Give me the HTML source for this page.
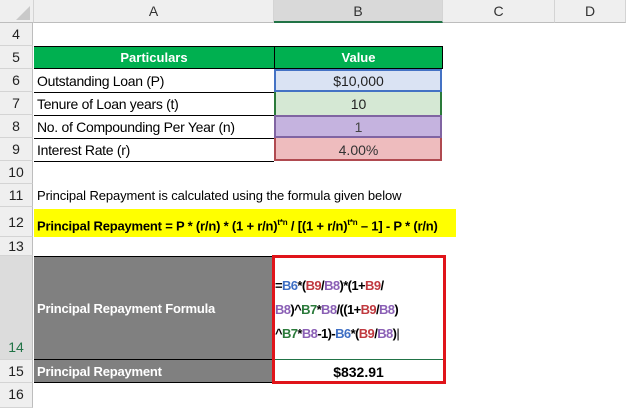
<!DOCTYPE html>
<html><head><style>
*{margin:0;padding:0;box-sizing:border-box}
body{width:626px;height:408px;overflow:hidden;background:#fff;font-family:"Liberation Sans",sans-serif;font-size:13px;color:#000;position:relative}
.a{position:absolute}
.rh{position:absolute;left:0;width:33px;background:#efefef;border-bottom:1px solid #d4d4d4;border-right:1px solid #bdbdbd;text-align:center;color:#222;font-size:14px}
.ch{position:absolute;top:0;height:23px;background:#efefef;border-right:1px solid #d4d4d4;border-bottom:1px solid #bdbdbd;text-align:center;line-height:23px;color:#333;font-size:14px}
.c{position:absolute;white-space:nowrap;line-height:22px}
.b{color:#3e6fc4}.r{color:#c0393f}.p{color:#8a5fb5}.g{color:#2a7a3a}
</style></head><body>
<div class="ch" style="left:0;width:34px"></div>
<svg class="a" style="left:14px;top:6px" width="16" height="14"><polygon points="16,0 16,14 2,14" fill="#c9c9c9"/></svg>
<div class="ch" style="left:34px;width:240px">A</div>
<div class="ch" style="left:274px;width:169px;background:#d9d9d9;border-bottom:2px solid #217346">B</div>
<div class="ch" style="left:443px;width:112px">C</div>
<div class="ch" style="left:555px;width:71px">D</div>

<div class="rh" style="top:23px;height:23px;line-height:23px">4</div>
<div class="rh" style="top:46px;height:23px;line-height:23px">5</div>
<div class="rh" style="top:69px;height:23px;line-height:23px">6</div>
<div class="rh" style="top:92px;height:23px;line-height:23px">7</div>
<div class="rh" style="top:115px;height:23px;line-height:23px">8</div>
<div class="rh" style="top:138px;height:23px;line-height:23px">9</div>
<div class="rh" style="top:161px;height:23px;line-height:23px">10</div>
<div class="rh" style="top:184px;height:23px;line-height:23px">11</div>
<div class="rh" style="top:207px;height:30px;line-height:30px">12</div>
<div class="rh" style="top:237px;height:19px;line-height:19px">13</div>
<div class="rh" style="top:256px;height:104px;line-height:26px;padding-top:78px;color:#217346;background:#dcdcdc">14</div>
<div class="rh" style="top:360px;height:23px;line-height:23px">15</div>
<div class="rh" style="top:383px;height:25px;line-height:23px">16</div>

<div class="a" style="left:34px;top:46px;width:409px;height:23px;background:#00b050;border-top:1px solid #000;border-bottom:1px solid #000"></div>
<div class="a" style="left:274px;top:46px;width:1px;height:23px;background:#000"></div>
<div class="a" style="left:442px;top:46px;width:1px;height:23px;background:#000"></div>
<div class="c" style="left:34px;top:47px;width:240px;text-align:center;color:#fff;font-weight:bold">Particulars</div>
<div class="c" style="left:274px;top:47px;width:169px;text-align:center;color:#fff;font-weight:bold">Value</div>

<div class="a" style="left:34px;top:92px;width:240px;height:1px;background:#000"></div>
<div class="a" style="left:34px;top:115px;width:240px;height:1px;background:#000"></div>
<div class="a" style="left:34px;top:138px;width:240px;height:1px;background:#000"></div>
<div class="a" style="left:34px;top:161px;width:240px;height:1px;background:#000"></div>
<div class="c" style="left:37px;top:70px;font-size:14px;letter-spacing:-0.3px">Outstanding Loan (P)</div>
<div class="c" style="left:37px;top:93px;font-size:14px;letter-spacing:-0.3px">Tenure of Loan years (t)</div>
<div class="c" style="left:37px;top:116px;font-size:14px;letter-spacing:-0.3px">No. of Compounding Per Year (n)</div>
<div class="c" style="left:37px;top:139px;font-size:14px;letter-spacing:-0.3px">Interest Rate (r)</div>

<div class="a" style="left:274px;top:69px;width:168px;height:23px;background:#dae3f3;border:2px solid #4472c4"></div>
<div class="a" style="left:274px;top:92px;width:168px;height:23px;background:#d5e8d4;border-left:2px solid #2a7a3a;border-right:2px solid #2a7a3a"></div>
<div class="a" style="left:274px;top:115px;width:168px;height:23px;background:#c5b3df;border:2px solid #8064a2"></div>
<div class="a" style="left:274px;top:138px;width:168px;height:23px;background:#eebcbe;border:2px solid #b04a50;border-top:none"></div>
<div class="c" style="left:274px;top:70px;width:169px;text-align:center;color:#222;font-size:14px">$10,000</div>
<div class="c" style="left:274px;top:93px;width:169px;text-align:center;color:#222;font-size:14px">10</div>
<div class="c" style="left:274px;top:116px;width:169px;text-align:center;color:#444;font-size:14px">1</div>
<div class="c" style="left:274px;top:139px;width:169px;text-align:center;color:#333;font-size:14px">4.00%</div>

<div class="c" style="left:37px;top:185px;font-size:13px;letter-spacing:-0.1px">Principal Repayment is calculated using the formula given below</div>
<div class="a" style="left:34px;top:209px;width:422px;height:28px;background:#ffff00"></div>
<div class="c" style="left:37px;top:212px;font-weight:bold;font-size:13px;letter-spacing:-0.2px">Principal Repayment = P * (r/n) * (1 + r/n)<sup style="font-size:8px">t*n</sup> / [(1 + r/n)<sup style="font-size:8px">t*n</sup> – 1] - P * (r/n)</div>

<div class="a" style="left:34px;top:256px;width:240px;height:127px;background:#808080;border-top:1px solid #000;border-bottom:1px solid #000"></div>
<div class="a" style="left:34px;top:359px;width:240px;height:1px;background:#000"></div>
<div class="c" style="left:37px;top:298px;color:#fff;font-weight:bold;letter-spacing:-0.2px">Principal Repayment Formula</div>
<div class="c" style="left:37px;top:361px;color:#fff;font-weight:bold;letter-spacing:-0.2px">Principal Repayment</div>
<div class="a" style="left:272px;top:255px;width:174px;height:129px;border:3px solid #e0141a"></div>
<div class="a" style="left:275px;top:359px;width:168px;height:1px;background:#217346"></div>
<div class="c" style="left:275px;top:274px;font-weight:bold;line-height:24px;font-size:13px;letter-spacing:-0.6px">=<span class="b">B6</span>*(<span class="r">B9</span>/<span class="p">B8</span>)*(1+<span class="r">B9</span>/<br><span class="p">B8</span>)^<span class="g">B7</span>*<span class="p">B8</span>/((1+<span class="r">B9</span>/<span class="p">B8</span>)<br>^<span class="g">B7</span>*<span class="p">B8</span>-1)-<span class="b">B6</span>*(<span class="r">B9</span>/<span class="p">B8</span>)<span style="font-weight:normal">|</span></div>
<div class="c" style="left:274px;top:361px;width:169px;text-align:center;font-weight:bold;font-size:14px">$832.91</div>
</body></html>
